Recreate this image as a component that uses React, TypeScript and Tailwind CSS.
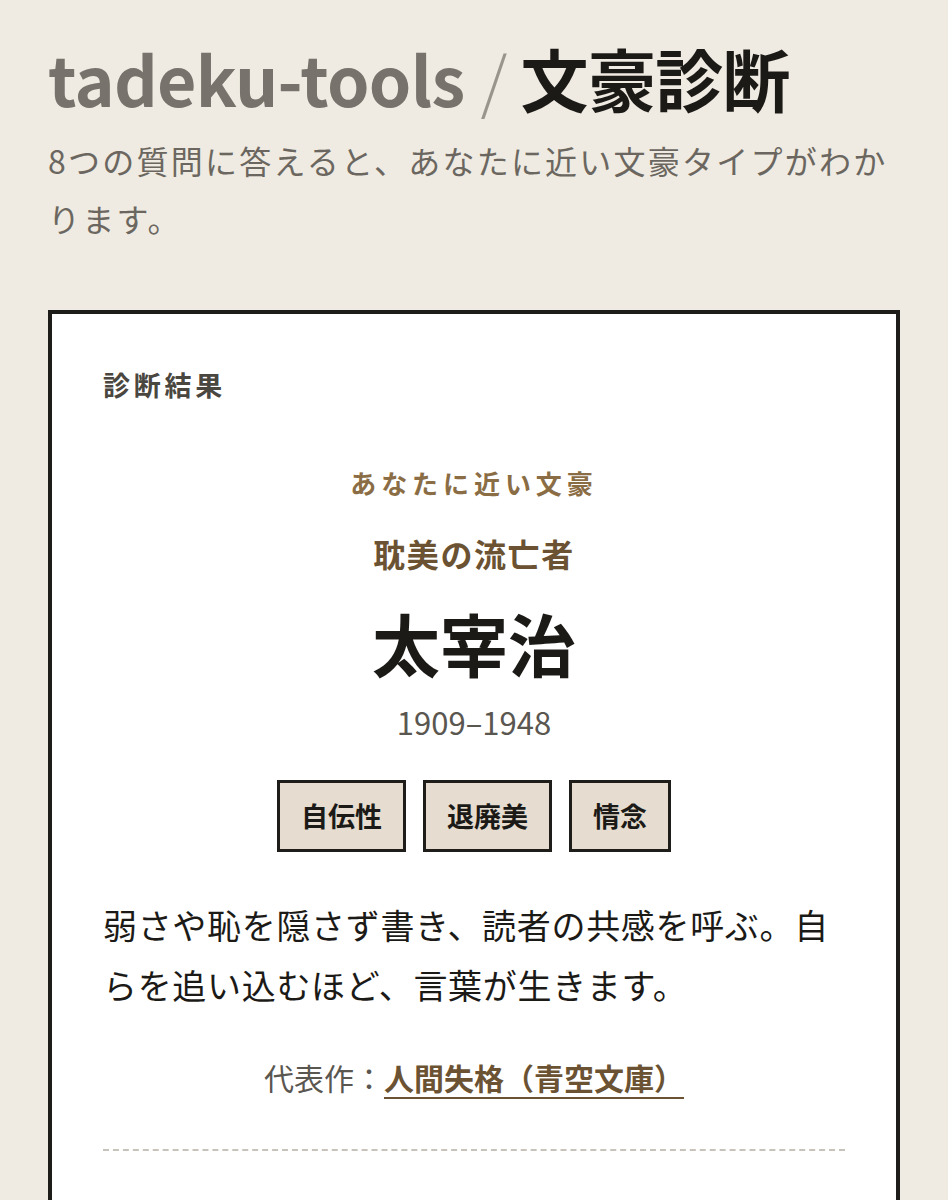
import React from 'react';

const tags = ['自伝性', '退廃美', '情念'];

const App: React.FC = () => {
  return (
    <div className="min-h-[1200px] bg-[#efebe2] px-[48px] pt-[37px] font-['Noto_Sans_CJK_JP',sans-serif] text-[#1c1a17]">
      <h1 className="text-[68px] font-bold leading-[82px] tracking-[-0.01em] whitespace-nowrap">
        <span className="text-[#77736c]">tadeku-tools</span>
        <span className="ml-[16px] mr-[14px] font-light text-[#9a958c]">/</span>
        <span>文豪診断</span>
      </h1>
      <p className="mt-[12px] text-[32px] leading-[58px] tracking-[0.07em] text-[#6b6760]">
        8つの質問に答えると、あなたに近い文豪タイプがわかります。
      </p>

      <div className="mt-[63px] border-4 border-[#1f1d1a] bg-white px-[51px] pt-[51px] pb-[60px]">
        <div className="text-[27px] font-bold leading-[40px] tracking-[0.14em] text-[#4a4640]">診断結果</div>

        <div className="mt-[58px] flex flex-col items-center">
          <div className="text-[26px] font-bold leading-[40px] tracking-[0.19em] text-[#8b6d45]">あなたに近い文豪</div>
          <div className="mt-[26px] text-[32px] font-bold leading-[48px] tracking-[0.05em] text-[#6b5232]">耽美の流亡者</div>
          <div className="mt-[26px] text-[68px] font-bold leading-[80px] text-[#1c1a17]">太宰治</div>
          <div className="mt-[17px] text-[31px] leading-[44px] text-[#5a5650]">1909–1948</div>

          <div className="mt-[36px] flex gap-[17px]">
            {tags.map(tag => (
              <div key={tag} className="border-[3px] border-[#1f1d1a] bg-[#e6ddd0] px-[21px] py-[13px] text-[27px] font-bold leading-[40px]">
                {tag}
              </div>
            ))}
          </div>
        </div>

        <p className="mt-[43px] text-[34px] leading-[60px] tracking-[0.02em] text-[#1c1a17]">
          弱さや恥を隠さず書き、読者の共感を呼ぶ。自らを追い込むほど、言葉が生きます。
        </p>

        <div className="mt-[40px] text-center text-[30px] leading-[45px]">
          <span className="text-[#5a5650]">代表作：</span>
          <a href="#" className="font-bold text-[#6b5232] underline decoration-2 underline-offset-[7px]">
            人間失格（青空文庫）
          </a>
        </div>

        <div className="mt-[49px] border-t-2 border-dashed border-[#c8c3ba]" />
        <div className="h-[200px]" />
      </div>
    </div>
  );
};

export default App;
